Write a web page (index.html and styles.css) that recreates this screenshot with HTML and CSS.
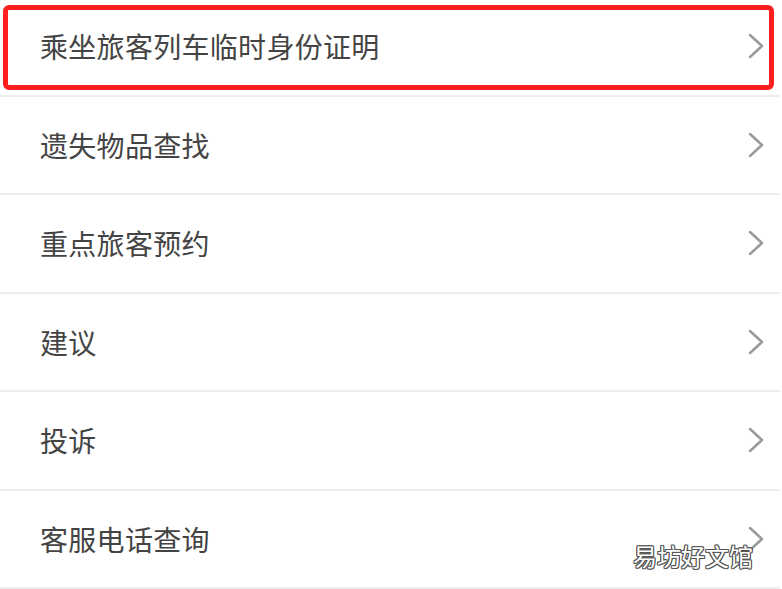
FILE: index.html
```html
<!DOCTYPE html>
<html lang="zh-CN">
<head>
<meta charset="utf-8">
<link rel="stylesheet" href="styles.css">
</head>
<body>
<div class="page">
  <ul class="list">
    <li class="row"><span class="label">乘坐旅客列车临时身份证明</span><svg class="chev" viewBox="0 0 16 26"><path d="M2 2 L14 13 L2 24" /></svg></li>
    <li class="row"><span class="label">遗失物品查找</span><svg class="chev" viewBox="0 0 16 26"><path d="M2 2 L14 13 L2 24" /></svg></li>
    <li class="row"><span class="label">重点旅客预约</span><svg class="chev" viewBox="0 0 16 26"><path d="M2 2 L14 13 L2 24" /></svg></li>
    <li class="row"><span class="label">建议</span><svg class="chev" viewBox="0 0 16 26"><path d="M2 2 L14 13 L2 24" /></svg></li>
    <li class="row"><span class="label">投诉</span><svg class="chev" viewBox="0 0 16 26"><path d="M2 2 L14 13 L2 24" /></svg></li>
    <li class="row"><span class="label">客服电话查询</span><svg class="chev" viewBox="0 0 16 26"><path d="M2 2 L14 13 L2 24" /></svg></li>
  </ul>
  <div class="highlight"></div>
  <div class="watermark">易坊好文馆</div>
</div>
</body>
</html>
```

FILE: styles.css
```css
html, body {
  margin: 0;
  padding: 0;
  background: #ffffff;
  overflow: hidden;
}
body {
  width: 782px;
  height: 589px;
  font-family: "Noto Sans CJK SC", "Noto Sans", sans-serif;
}
.page {
  position: relative;
  width: 782px;
  height: 589px;
  overflow: hidden;
}
.list {
  list-style: none;
  margin: -2px 0 0 0;
  padding: 0;
  width: 780px;
}
.row {
  display: flex;
  align-items: center;
  justify-content: space-between;
  height: 96.5px;
  border-bottom: 2px solid #eeeeee;
  padding: 0 16px 0 40px;
  box-sizing: content-box;
  width: calc(780px - 56px);
}
.label {
  font-size: 28px;
  color: #444444;
  line-height: 1;
  letter-spacing: 0.3px;
}
.chev {
  width: 16px;
  height: 26px;
  fill: none;
  stroke: #9a9a9a;
  stroke-width: 2.5;
  stroke-linecap: round;
  stroke-linejoin: round;
}
.highlight {
  position: absolute;
  left: 3px;
  top: 5px;
  width: 771px;
  height: 85px;
  box-sizing: border-box;
  border: 5px solid #ff1f1f;
  border-radius: 6px;
}
.watermark {
  position: absolute;
  left: 633px;
  top: 539px;
  font-size: 24px;
  line-height: 34px;
  color: #ffffff;
  letter-spacing: 0;
  text-shadow:
    1px 0 0 #555, -1px 0 0 #555, 0 1px 0 #555, 0 -1px 0 #555,
    1px 1px 0 #555, -1px -1px 0 #555, 1px -1px 0 #555, -1px 1px 0 #555;
}
```
